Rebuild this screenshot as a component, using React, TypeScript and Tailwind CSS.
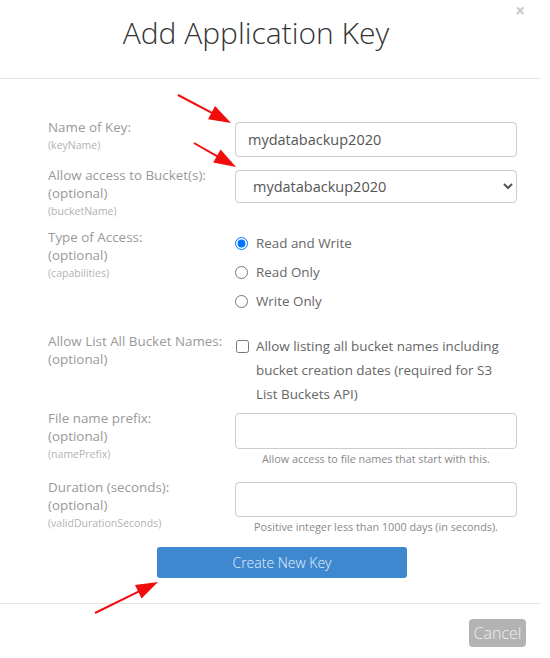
import React from 'react';

type Pt = [number, number];

function Arrow({ from, to }: { from: Pt; to: Pt }) {
  const [x1, y1] = from;
  const [x2, y2] = to;
  const len = Math.hypot(x2 - x1, y2 - y1);
  const ux = (x2 - x1) / len;
  const uy = (y2 - y1) / len;
  const hl = 22;
  const hw = 7.5;
  const bx = x2 - ux * hl;
  const by = y2 - uy * hl;
  const head = `${x2},${y2} ${bx - uy * hw},${by + ux * hw} ${bx + uy * hw},${by - ux * hw}`;
  return (
    <g>
      <line x1={x1} y1={y1} x2={bx + ux * 2} y2={by + uy * 2} stroke="#f20d0d" strokeWidth={2} />
      <polygon points={head} fill="#f20d0d" />
    </g>
  );
}

function Label({ title, optional, field }: { title: string; optional?: boolean; field?: string }) {
  return (
    <div className="w-[187px] shrink-0 text-[13.4px] leading-[18px] text-[#999]">
      <div>{title}</div>
      {optional && <div>(optional)</div>}
      {field && <div className="text-[10.5px] text-[#b3b3b3]">({field})</div>}
    </div>
  );
}

function Radio({ label, checked }: { label: string; checked?: boolean }) {
  return (
    <label className="flex h-[29px] items-center">
      <input type="radio" name="cap" defaultChecked={checked} className="m-0 h-[13px] w-[13px]" />
      <span className="ml-[8px] text-[13.4px] text-[#666]">{label}</span>
    </label>
  );
}

export default function App() {
  return (
    <div className="relative h-[658px] w-[550px] overflow-hidden bg-white font-['Open_Sans',sans-serif]">
      <div className="w-[541px]">
        {/* header */}
        <div className="relative h-[79px] border-b border-[#e5e5e5]">
          <div className="flex w-[512px] justify-center pt-[12px]">
            <h1 className="text-[30px] font-light leading-[42px] text-[#333]">Add Application Key</h1>
          </div>
          <button className="absolute right-[14px] top-[1px] flex h-[18px] w-[14px] items-center justify-center text-[17px] font-bold leading-none text-[#c8c8c8]">
            ×
          </button>
        </div>

        {/* body */}
        <div className="pl-[48px] pt-[39px]">
          <div className="mb-[9px] flex">
            <Label title="Name of Key:" field="keyName" />
            <input
              defaultValue="mydatabackup2020"
              className="mt-[4px] h-[35px] w-[282px] rounded-[4px] border border-[#ccc] px-[12px] text-[14.5px] text-[#555]"
            />
          </div>

          <div className="mb-[8px] flex">
            <Label title="Allow access to Bucket(s):" optional field="bucketName" />
            <select className="mt-[4px] h-[33px] w-[282px] rounded-[4px] border border-[#ccc] pl-[13px] pr-[6px] text-[14.5px] text-[#555]">
              <option>mydatabackup2020</option>
            </select>
          </div>

          <div className="mb-[16px] flex">
            <Label title="Type of Access:" optional field="capabilities" />
            <div className="mt-[1px]">
              <Radio label="Read and Write" checked />
              <Radio label="Read Only" />
              <Radio label="Write Only" />
            </div>
          </div>

          <div className="mb-[3px] flex">
            <Label title="Allow List All Bucket Names:" optional />
            <label className="mt-[2px] flex w-[282px] items-start">
              <input type="checkbox" className="m-0 ml-[1px] mt-[6px] h-[13px] w-[13px] shrink-0" />
              <span className="ml-[7px] text-[13.4px] leading-[24px] text-[#666]">
                Allow listing all bucket names including bucket creation dates (required for S3 List Buckets API)
              </span>
            </label>
          </div>

          <div className="mb-[12px] flex">
            <Label title="File name prefix:" optional field="namePrefix" />
            <div className="mt-[4px] w-[282px]">
              <input className="h-[36px] w-full rounded-[4px] border border-[#ccc] px-[12px] text-[14px]" />
              <div className="mt-[3px] text-center text-[10.8px] leading-[14px] text-[#888]">
                Allow access to file names that start with this.
              </div>
            </div>
          </div>

          <div className="flex">
            <Label title="Duration (seconds):" optional field="validDurationSeconds" />
            <div className="mt-[4px] w-[282px]">
              <input className="h-[35px] w-full rounded-[4px] border border-[#ccc] px-[12px] text-[14px]" />
              <div className="mt-[3px] text-center text-[10.8px] leading-[14px] text-[#888]">
                Positive integer less than 1000 days (in seconds).
              </div>
            </div>
          </div>
        </div>

        <div className="mt-[13px] flex pl-[157px]">
          <button className="h-[31px] w-[250px] rounded-[3px] bg-[#3e88d0] text-[14px] font-light text-[#e6f0fa]">
            Create New Key
          </button>
        </div>

        {/* footer */}
        <div className="mt-[25px] flex h-[55px] justify-end border-t border-[#e5e5e5] pr-[15px] pt-[15px]">
          <button className="h-[28px] w-[57px] rounded-[4px] bg-[#b3b3b3] text-[16px] font-light text-[#eeeeee]">Cancel</button>
        </div>
      </div>

      <svg className="pointer-events-none absolute left-0 top-0" width="550" height="658">
        <Arrow from={[178, 95]} to={[231, 123]} />
        <Arrow from={[194, 143]} to={[236, 167]} />
        <Arrow from={[95, 613]} to={[158, 582]} />
      </svg>
    </div>
  );
}
